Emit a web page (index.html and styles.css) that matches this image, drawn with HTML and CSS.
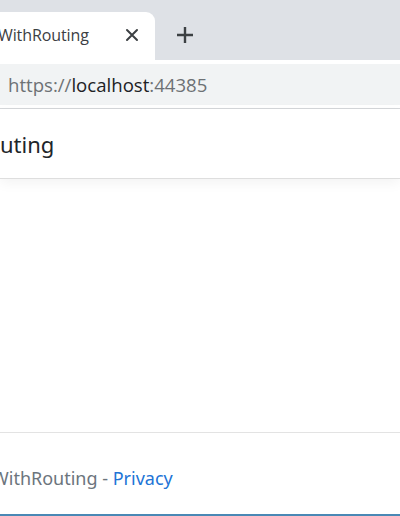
FILE: index.html
```html
<!DOCTYPE html>
<html lang="en">
<head>
    <meta charset="UTF-8">
    <meta name="viewport" content="width=device-width, initial-scale=1.0">
    <title>WithRouting</title>
    <link rel="stylesheet" href="styles.css">
</head>
<body>
    <div class="window">
        <div class="tabstrip">
            <div class="tab">
                <span class="tab-title">WithRouting</span>
                <svg class="tab-close" width="14" height="14" viewBox="0 0 14 14">
                    <path d="M2 2 L12 12 M12 2 L2 12" stroke="#3c4043" stroke-width="2" stroke-linecap="round"/>
                </svg>
            </div>
            <div class="new-tab">
                <svg width="20" height="20" viewBox="0 0 20 20">
                    <path d="M10 2 V18 M2 10 H18" stroke="#3c4043" stroke-width="2.4"/>
                </svg>
            </div>
        </div>

        <div class="toolbar">
            <div class="omnibox">
                <span class="url-dim">https://</span><span class="url-host">localhost</span><span class="url-dim">:44385</span>
            </div>
        </div>

        <div class="page">
            <header class="navbar">
                <span class="brand">uting</span>
            </header>

            <main class="content"></main>

            <footer class="footer">
                <span class="footer-text">WithRouting - <a href="#">Privacy</a></span>
            </footer>
        </div>
    </div>
</body>
</html>
```

FILE: styles.css
```css
* {
    box-sizing: border-box;
    margin: 0;
    padding: 0;
}

html, body {
    height: 100%;
    overflow: hidden;
}

body {
    font-family: "Open Sans", "Noto Sans", Arial, sans-serif;
    background-color: #fff;
}

.window {
    display: flex;
    flex-direction: column;
    height: 100%;
    border-bottom: 2px solid #4a88b5;
}

/* browser chrome */
.tabstrip {
    height: 60px;
    background-color: #dee1e6;
    display: flex;
    align-items: flex-end;
    flex-shrink: 0;
}

.tab {
    width: 155px;
    height: 48px;
    background-color: #fff;
    border-radius: 0 9px 0 0;
    display: flex;
    align-items: center;
    justify-content: space-between;
    padding-right: 16px;
    padding-bottom: 2px;
}

.tab-title {
    font-size: 16px;
    color: #3c4043;
    margin-left: -2px;
    letter-spacing: -0.1px;
}

.new-tab {
    width: 60px;
    height: 48px;
    display: flex;
    align-items: center;
    justify-content: center;
    padding-bottom: 2px;
}

.toolbar {
    background-color: #fff;
    padding: 4px 0 3px;
    border-bottom: 1px solid #d5d7da;
    flex-shrink: 0;
}

.omnibox {
    height: 41px;
    background-color: #f1f3f4;
    display: flex;
    align-items: center;
    padding-left: 8px;
    font-size: 18.6px;
}

.url-dim {
    color: #6d7175;
}

.url-host {
    color: #202124;
}

/* page */
.page {
    flex: 1;
    display: flex;
    flex-direction: column;
    font-family: "Noto Sans", "Open Sans", Arial, sans-serif;
}

.navbar {
    height: 70px;
    display: flex;
    align-items: center;
    border-bottom: 1px solid #dedede;
    box-shadow: 0 4px 12px rgba(0,0,0,0.05);
    padding-top: 1px;
}

.brand {
    font-size: 22px;
    color: #212529;
}

.content {
    flex: 1;
}

.footer {
    height: 82px;
    border-top: 1px solid #e3e3e3;
    display: flex;
    align-items: center;
    padding-top: 8px;
}

.footer-text {
    font-size: 18px;
    color: #6c757d;
    margin-left: -8px;
}

.footer-text a {
    color: #2174d6;
    text-decoration: none;
}
```
